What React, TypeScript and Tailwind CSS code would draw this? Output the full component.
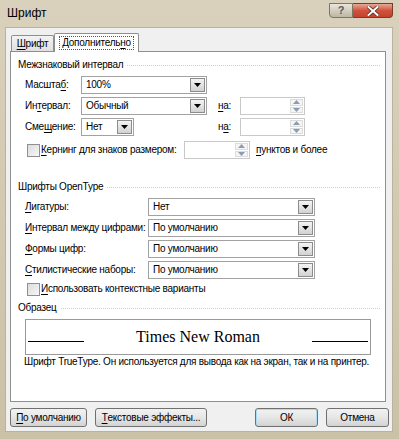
import type { ReactNode } from "react";

const U = ({ c }: { c: string }) => (
  <span className="underline decoration-1 underline-offset-[2px]">{c}</span>
);

const Arrow = ({ up, color }: { up?: boolean; color: string }) => (
  <svg width="7" height="4" viewBox="0 0 7 4" className="block">
    <path d={up ? "M0 4 L3.5 0 L7 4 Z" : "M0 0 L7 0 L3.5 4 Z"} fill={color} />
  </svg>
);

const Combo = ({ value, className }: { value: string; className: string }) => (
  <div
    className={`flex h-[18px] items-stretch border border-[#a2a2a2] bg-white p-px ${className}`}
  >
    <div className="flex flex-1 items-center pl-[3px] leading-none">{value}</div>
    <div className="flex w-[15px] items-center justify-center border border-[#8c8c8c] bg-gradient-to-b from-[#f4f4f4] to-[#d2d2d2]">
      <Arrow color="#000" />
    </div>
  </div>
);

const Spinner = ({ className }: { className: string }) => (
  <div
    className={`flex h-[18px] items-stretch border border-[#c9c9c9] bg-white p-px ${className}`}
  >
    <div className="flex-1" />
    <div className="flex w-[13px] flex-col gap-px">
      <div className="flex flex-1 items-center justify-center border border-[#dcdcdc] bg-[#f5f5f5]">
        <Arrow up color="#8a9bb5" />
      </div>
      <div className="flex flex-1 items-center justify-center border border-[#dcdcdc] bg-[#f5f5f5]">
        <Arrow color="#8a9bb5" />
      </div>
    </div>
  </div>
);

const Check = () => (
  <div className="h-[13px] w-[13px] shrink-0 border border-[#8f8f8f] bg-gradient-to-br from-[#dcdcdc] to-[#f7f7f7]" />
);

const Section = ({ title }: { title: string }) => (
  <div className="flex h-[14px] items-center pl-[7px] pr-[5px]">
    <span className="leading-none">{title}</span>
    <div className="ml-[4px] h-px flex-1 border-t border-dotted border-[#c5d1de]" />
  </div>
);

const Btn = ({ children, className }: { children: ReactNode; className: string }) => (
  <div
    className={`flex h-[19px] items-center justify-center rounded-[3px] border border-[#707070] bg-gradient-to-b from-[#f2f2f2] via-[#e6e6e6] to-[#d3d3d3] leading-none ${className}`}
  >
    {children}
  </div>
);

export default function App() {
  return (
    <div className="flex h-[439px] w-[399px] flex-col whitespace-nowrap bg-gradient-to-b from-[#d9d1bb] via-[#d2c9b0] to-[#cbc1a6] font-['Liberation_Sans',sans-serif] text-[10px] tracking-[-0.25px] text-black">
      {/* title bar */}
      <div className="flex h-[27px] items-start">
        <div className="pl-[7px] pt-[7px] text-[12px] leading-none tracking-normal">Шрифт</div>
        <div className="ml-auto mr-[6px] flex">
          <div className="mt-[3px] flex h-[15px] w-[24px] items-center justify-center rounded-bl-[4px] border border-[#7b7766] bg-gradient-to-b from-[#e9e5da] to-[#bdb7a4] text-[11px] font-bold leading-none text-[#5a5a5a]">
            ?
          </div>
          <div className="mt-[3px] flex h-[15px] w-[40px] items-center justify-center rounded-br-[4px] border border-l-0 border-[#7a3a2e] bg-gradient-to-b from-[#e6a797] via-[#d0533c] to-[#c4422c]">
            <svg width="12" height="10" viewBox="0 0 12 10">
              <path
                d="M1.5 1 L10.5 9 M10.5 1 L1.5 9"
                stroke="#5c2a20"
                strokeWidth="3.6"
                strokeLinecap="square"
              />
              <path
                d="M1.5 1 L10.5 9 M10.5 1 L1.5 9"
                stroke="#fff"
                strokeWidth="2"
                strokeLinecap="square"
              />
            </svg>
          </div>
        </div>
      </div>

      {/* client area */}
      <div className="mb-[7px] ml-[5px] mr-[6px] flex flex-1 flex-col border border-[#b9b29e] bg-[#f0f0f0]">
        {/* tabs */}
        <div className="flex h-[23px] items-end pl-[5px] pt-[4px]">
          <div className="flex h-[16px] w-[43px] items-center justify-center rounded-t-[2px] border border-b-0 border-[#8e8f8f] bg-gradient-to-b from-[#f3f3f3] to-[#e0e0e0] leading-none">
            <U c="Ш" />
            рифт
          </div>
          <div className="z-10 -mb-px flex h-[19px] w-[85px] items-center justify-center rounded-t-[2px] border border-b-0 border-[#8e8f8f] bg-white leading-none">
            <span className="border border-dotted border-[#555] px-[2px] py-[1px]">
              Дополнитель
              <U c="н" />о
            </span>
          </div>
        </div>

        {/* panel */}
        <div className="ml-[4px] mr-[6px] flex h-[351px] flex-col border border-[#8e8f8f] bg-white pt-[6px]">
          <Section title="Межзнаковый интервал" />

          <div className="mt-[4px] flex h-[18px] items-center pl-[14px]">
            <span className="w-[56px] leading-none">
              Масшта
              <U c="б" />:
            </span>
            <Combo value="100%" className="w-[126px]" />
          </div>

          <div className="mt-[3px] flex h-[18px] items-center pl-[14px]">
            <span className="w-[56px] leading-none">
              Ин
              <U c="т" />
              ервал:
            </span>
            <Combo value="Обычный" className="w-[126px]" />
            <span className="ml-[11px] w-[22px] leading-none">
              <U c="н" />
              а:
            </span>
            <Spinner className="w-[65px]" />
          </div>

          <div className="mt-[3px] flex h-[18px] items-center pl-[14px]">
            <span className="w-[56px] leading-none">
              Сме
              <U c="щ" />
              ение:
            </span>
            <Combo value="Нет" className="w-[53px]" />
            <span className="ml-[84px] w-[22px] leading-none">
              н<U c="а" />:
            </span>
            <Spinner className="w-[65px]" />
          </div>

          <div className="mt-[5px] flex h-[18px] items-center pl-[16px]">
            <Check />
            <span className="ml-[1px] w-[143px] leading-none">
              <U c="К" />
              ернинг для знаков размером:
            </span>
            <Spinner className="w-[66px]" />
            <span className="ml-[6px] leading-none">
              <U c="п" />
              унктов и более
            </span>
          </div>

          <div className="mt-[21px]">
            <Section title="Шрифты OpenType" />
          </div>

          {[
            ["Л", "игатуры:", "Нет"],
            ["И", "нтервал между цифрами:", "По умолчанию"],
            ["Ф", "ормы цифр:", "По умолчанию"],
            ["С", "тилистические наборы:", "По умолчанию"],
          ].map(([k, rest, v], i) => (
            <div
              key={rest}
              className={`flex h-[18px] items-center pl-[14px] ${i === 0 ? "mt-[4px]" : "mt-[3px]"}`}
            >
              <span className="w-[123px] leading-none">
                <U c={k} />
                {rest}
              </span>
              <Combo value={v} className="w-[167px]" />
            </div>
          ))}

          <div className="mt-[3px] flex h-[14px] items-center pl-[16px]">
            <Check />
            <span className="ml-[1px] leading-none">
              <U c="И" />
              спользовать контекстные варианты
            </span>
          </div>

          <div className="mt-[5px]">
            <Section title="Образец" />
          </div>

          <div className="mx-[14px] mt-[4px] flex h-[36px] items-center border border-[#9a9a9a] bg-white px-[2px] tracking-normal">
            <div className="mt-[8px] h-px w-[56px] bg-black" />
            <div className="flex-1 text-center font-['Liberation_Serif',serif] text-[16px] leading-none">
              Times New Roman
            </div>
            <div className="mt-[8px] h-px w-[56px] bg-black" />
          </div>

          <div className="mt-0 pl-[13px] leading-[14px]">
            Шрифт TrueType. Он используется для вывода как на экран, так и на принтер.
          </div>
        </div>

        {/* buttons */}
        <div className="mt-[6px] flex items-center pl-[4px]">
          <Btn className="w-[77px]">
            <U c="П" />о умолчанию
          </Btn>
          <Btn className="ml-[8px] w-[112px]">
            <U c="Т" />
            екстовые эффекты...
          </Btn>
          <Btn className="ml-[48px] w-[63px] border-[#3c7fb1] shadow-[inset_0_0_0_1px_#a9dcf6]">
            ОК
          </Btn>
          <Btn className="ml-[8px] w-[63px]">Отмена</Btn>
        </div>
      </div>
    </div>
  );
}
